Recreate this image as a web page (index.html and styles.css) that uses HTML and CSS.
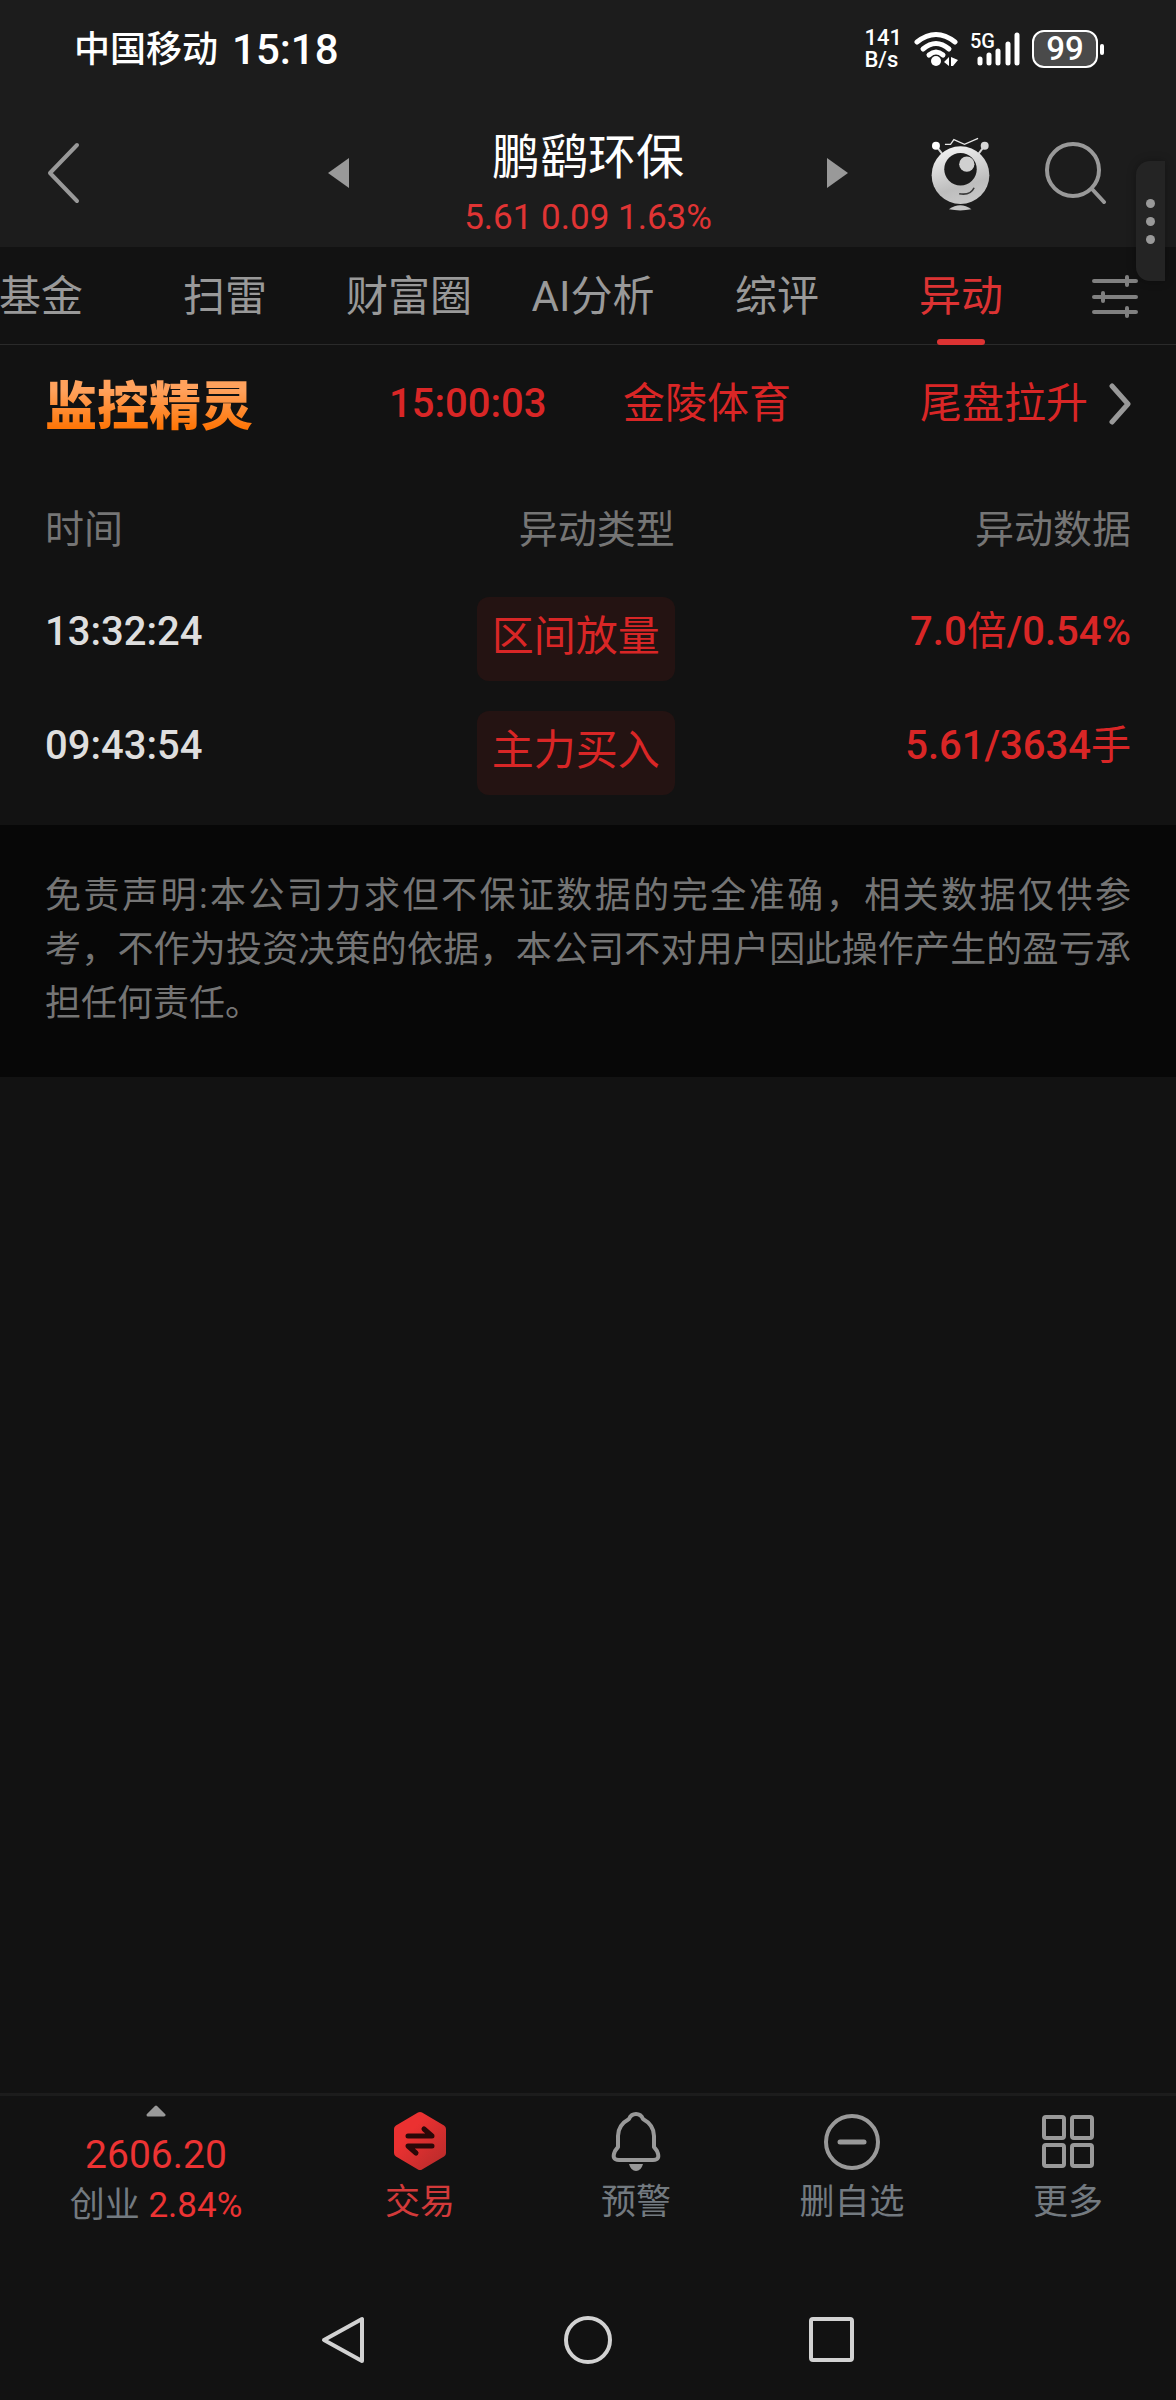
FILE: index.html
```html
<!DOCTYPE html>
<html lang="zh-CN">
<head>
    <meta charset="UTF-8">
    <meta name="viewport" content="width=device-width, initial-scale=1.0">
    <title>鹏鹞环保 - 异动</title>
    <link rel="stylesheet" href="styles.css">
</head>
<body>
    <!-- Status bar -->
    <div class="status-bar">
        <div class="status-left">
            <span class="carrier">中国移动</span>
            <span class="clock">15:18</span>
        </div>
        <div class="status-right">
            <span class="net-speed">141<br>B/s</span>
            <svg width="46" height="38" viewBox="0 0 46 38">
                <g fill="none" stroke="#fff" stroke-width="5" stroke-linecap="round">
                    <path d="M3 12Q22 -3 41 12"/>
                    <path d="M9 19Q22 8 35 19"/>
                    <path d="M15 25Q22 19 29 25"/>
                </g>
                <circle cx="22" cy="31" r="5" fill="#fff"/>
                <path d="M35 27v9l-5-4zM37 27l7 3-5 6h-2z" fill="#fff"/>
            </svg>
            <span class="signal">
                <span class="network">5G</span>
                <svg width="52" height="38" viewBox="0 0 52 38">
                    <path d="M10 29v4M19 25v8M28 21v12M38 14v19M47 5v28" stroke="#fff" stroke-width="5" stroke-linecap="round"/>
                </svg>
            </span>
            <span class="battery">99</span>
        </div>
    </div>

    <!-- Stock header -->
    <header class="header">
        <button class="icon-btn back" aria-label="返回">
            <svg width="34" height="62" viewBox="0 0 34 62"><path d="M31 3L4 31l27 28" fill="none" stroke="#999" stroke-width="4" stroke-linecap="round" stroke-linejoin="round"/></svg>
        </button>
        <div class="stock">
            <button class="icon-btn" aria-label="上一只">
                <svg width="21" height="30" viewBox="0 0 21 30"><path d="M21 0v30L0 15z" fill="#999"/></svg>
            </button>
            <div class="stock-info">
                <h1 class="stock-name">鹏鹞环保</h1>
                <p class="stock-price">5.61 0.09 1.63%</p>
            </div>
            <button class="icon-btn" aria-label="下一只">
                <svg width="21" height="30" viewBox="0 0 21 30"><path d="M0 0v30l21-15z" fill="#999"/></svg>
            </button>
        </div>
        <div class="header-actions">
            <button class="icon-btn" aria-label="助手">
                <svg width="61" height="77" viewBox="90 70 184 230">
                    <defs>
                        <linearGradient id="face" x1="0.3" y1="0" x2="0.6" y2="1">
                            <stop offset="0" stop-color="#f2f2f2"/>
                            <stop offset="0.7" stop-color="#bdbdbd"/>
                            <stop offset="1" stop-color="#c8c8c8"/>
                        </linearGradient>
                    </defs>
                    <path d="M135 97h17l10-14 32 14 41-18" fill="none" stroke="#e6e6e6" stroke-width="4"/>
                    <path d="M108 101l20 26M255 101l-20 26" stroke="#d5d5d5" stroke-width="6"/>
                    <circle cx="108" cy="101" r="12" fill="#fff"/>
                    <circle cx="255" cy="101" r="12" fill="#d8d8d8"/>
                    <circle cx="182" cy="190" r="87" fill="url(#face)"/>
                    <circle cx="182" cy="172" r="49" fill="#1c1c1c"/>
                    <circle cx="201" cy="157" r="23" fill="#d0d0d0"/>
                    <path d="M178 246q34 6 45-18" fill="none" stroke="#3a3a3a" stroke-width="5"/>
                    <path d="M147 293q34-24 68 0-34 7-68 0z" fill="#c4c4c4"/>
                </svg>
            </button>
            <button class="icon-btn" aria-label="搜索">
                <svg width="62" height="62" viewBox="0 0 62 62" fill="none" stroke="#999" stroke-width="4" stroke-linecap="round"><circle cx="28" cy="28" r="26"/><path d="M47 47l12 13"/></svg>
            </button>
        </div>
        <div class="side-handle"><i></i><i></i><i></i></div>
    </header>

    <!-- Tabs -->
    <nav class="tabs">
        <div class="tab-list">
            <a class="tab" href="#">基金</a>
            <a class="tab" href="#">扫雷</a>
            <a class="tab" href="#">财富圈</a>
            <a class="tab" href="#">AI分析</a>
            <a class="tab" href="#">综评</a>
            <a class="tab active" href="#">异动</a>
        </div>
        <button class="icon-btn" aria-label="设置">
            <svg width="46" height="44" viewBox="0 0 46 44" fill="none" stroke="#808080" stroke-width="4" stroke-linecap="round"><path d="M2 7h42M35 3v8M2 23h42M11 19v8M2 38h42M35 34v8"/></svg>
        </button>
    </nav>

    <main class="content">
        <!-- Monitor banner -->
        <a class="monitor" href="#">
            <strong class="monitor-logo">监控精灵</strong>
            <span class="monitor-time">15:00:03</span>
            <span>金陵体育</span>
            <span class="monitor-type">尾盘拉升</span>
            <svg width="24" height="42" viewBox="0 0 24 42"><path d="M4 3l16 18L4 39" fill="none" stroke="#999" stroke-width="5" stroke-linecap="round" stroke-linejoin="round"/></svg>
        </a>

        <table class="moves">
            <thead>
                <tr><th class="col-time">时间</th><th class="col-type">异动类型</th><th>异动数据</th></tr>
            </thead>
            <tbody>
                <tr><td>13:32:24</td><td><span class="badge">区间放量</span></td><td class="value">7.0<span>倍</span>/0.54%</td></tr>
                <tr><td>09:43:54</td><td><span class="badge">主力买入</span></td><td class="value">5.61/3634<span>手</span></td></tr>
            </tbody>
        </table>

        <p class="disclaimer">免责声明:本公司力求但不保证数据的完全准确，相关数据仅供参考，不作为投资决策的依据，本公司不对用户因此操作产生的盈亏承担任何责任。</p>
    </main>

    <!-- Bottom toolbar -->
    <footer class="toolbar">
        <button class="index-quote">
            <svg width="20" height="12" viewBox="0 0 20 12"><path d="M10 2l8 8H2z" fill="#999" stroke="#999" stroke-width="3" stroke-linejoin="round"/></svg>
            <span class="index-value">2606.20</span>
            <span class="index-change">创业 <em>2.84%</em></span>
        </button>
        <button class="tool trade">
            <svg width="54" height="60" viewBox="0 0 54 60">
                <defs>
                    <linearGradient id="hex" x1="0" y1="0" x2="1" y2="1">
                        <stop offset="0.3" stop-color="#eb3131"/>
                        <stop offset="1" stop-color="#b92b2b"/>
                    </linearGradient>
                </defs>
                <path d="M27 5l22 13v24L27 55 5 42V18z" fill="url(#hex)" stroke="url(#hex)" stroke-width="8" stroke-linejoin="round"/>
                <path d="M15 25h24l-8-7M39 35H15l8 7" fill="none" stroke="#2a0808" stroke-width="5" stroke-linecap="round" stroke-linejoin="round"/>
            </svg>
            <span>交易</span>
        </button>
        <button class="tool">
            <svg width="54" height="60" viewBox="0 0 54 60">
                <path d="M27 3q-5 0-7 5Q9 14 9 25v11l-3 4q-4 9 4 9h34q8 0 4-9l-3-4V25Q45 14 34 8q-2-5-7-5z" fill="none" stroke="#999" stroke-width="4" stroke-linejoin="round"/>
                <path d="M20 53h14q-2 7-7 7t-7-7z" fill="#999"/>
            </svg>
            <span>预警</span>
        </button>
        <button class="tool">
            <svg width="58" height="60" viewBox="0 0 58 60" fill="none" stroke="#999" stroke-width="4" stroke-linecap="round"><circle cx="29" cy="31" r="26"/><path d="M17 31h24" stroke-width="5"/></svg>
            <span>删自选</span>
        </button>
        <button class="tool">
            <svg width="54" height="60" viewBox="0 0 54 60" fill="none" stroke="#999" stroke-width="4"><rect x="3" y="6" width="20" height="21" rx="2"/><rect x="31" y="6" width="20" height="21" rx="2"/><rect x="3" y="34" width="20" height="21" rx="2"/><rect x="31" y="34" width="20" height="21" rx="2"/></svg>
            <span>更多</span>
        </button>
    </footer>

    <!-- System navigation -->
    <div class="system-nav">
        <button class="icon-btn" aria-label="后退">
            <svg width="48" height="48" viewBox="0 0 48 48"><path d="M42 3v42L4 24z" fill="none" stroke="#d2d2d2" stroke-width="4" stroke-linejoin="round"/></svg>
        </button>
        <button class="icon-btn" aria-label="主页">
            <svg width="48" height="48" viewBox="0 0 48 48"><circle cx="24" cy="24" r="22" fill="none" stroke="#d2d2d2" stroke-width="4"/></svg>
        </button>
        <button class="icon-btn" aria-label="最近任务">
            <svg width="48" height="48" viewBox="0 0 48 48"><rect x="3" y="3" width="41" height="41" rx="2" fill="none" stroke="#d2d2d2" stroke-width="4"/></svg>
        </button>
    </div>
</body>
</html>
```
FILE: styles.css
```css
* {
    box-sizing: border-box;
}
body {
    margin: 0;
    min-height: 100vh;
    display: flex;
    flex-direction: column;
    background-color: #121212;
    color: #999;
    font-family: Roboto, "Noto Sans CJK SC", sans-serif;
}
h1, p {
    margin: 0;
    font-weight: 400;
}
a {
    color: inherit;
    text-decoration: none;
}
button {
    padding: 0;
    border: none;
    background: none;
    color: inherit;
    font-family: inherit;
    cursor: pointer;
}
svg {
    display: block;
    flex: none;
}
.icon-btn {
    flex: none;
}

/* Status bar */
.status-bar {
    display: flex;
    justify-content: space-between;
    align-items: center;
    height: 98px;
    padding: 0 78px 0 74px;
    background-color: #1c1c1c;
    color: #fff;
    font-weight: 500;
}
.status-left, .status-right {
    display: flex;
    align-items: center;
}
.status-left {
    gap: 14px;
    padding-top: 2px;
}
.carrier {
    font-size: 36px;
    line-height: 48px;
}
.clock {
    font-size: 42px;
    line-height: 48px;
}
.net-speed {
    margin-right: 12px;
    font-size: 22px;
    line-height: 22px;
}
.signal {
    position: relative;
    margin: 0 10px;
}
.network {
    position: absolute;
    left: 0;
    top: 1px;
    font-size: 20px;
    line-height: 20px;
}
.battery {
    position: relative;
    width: 66px;
    border: 2px solid #fff;
    border-radius: 12px;
    background-color: #4a4a4a;
    font-size: 33px;
    line-height: 34px;
    text-align: center;
}
.battery::after {
    content: "";
    position: absolute;
    right: -8px;
    top: 12px;
    width: 4px;
    height: 11px;
    border-radius: 2px;
    background-color: #fff;
}

/* Header */
.header {
    position: relative;
    display: grid;
    grid-template-columns: 1fr 520px 1fr;
    align-items: center;
    height: 149px;
    background-color: #1c1c1c;
}
.back {
    justify-self: start;
    margin-left: 46px;
}
.stock {
    display: flex;
    justify-content: space-between;
    align-items: center;
}
.stock-info {
    padding-top: 30px;
    text-align: center;
}
.stock-name {
    color: #fff;
    font-size: 48px;
    line-height: 60px;
}
.stock-price {
    color: #e03434;
    font-size: 35px;
    line-height: 60px;
}
.header-actions {
    display: flex;
    justify-content: flex-end;
    align-items: center;
    gap: 54px;
    padding-right: 69px;
}
.side-handle {
    position: absolute;
    z-index: 2;
    right: 11px;
    top: 63px;
    display: flex;
    flex-direction: column;
    justify-content: center;
    align-items: center;
    gap: 9px;
    width: 29px;
    height: 120px;
    border-radius: 14px 0 0 14px;
    background-color: #242424;
    box-shadow: 0 0 10px rgba(0, 0, 0, 0.3);
}
.side-handle i {
    width: 9px;
    height: 9px;
    border-radius: 50%;
    background-color: #999;
}

/* Tabs */
.tabs {
    display: flex;
    align-items: center;
    height: 98px;
    padding-right: 38px;
    border-bottom: 1px solid #2a2a2a;
}
.tab-list {
    flex: 1;
    display: flex;
    justify-content: flex-end;
    min-width: 0;
    margin-right: 39px;
    overflow: hidden;
}
.tab {
    position: relative;
    flex: none;
    width: 184px;
    height: 98px;
    font-size: 42px;
    line-height: 100px;
    text-align: center;
}
.tab.active {
    color: #dc3333;
}
.tab.active::after {
    content: "";
    position: absolute;
    left: 68px;
    bottom: 0;
    width: 48px;
    height: 6px;
    border-radius: 3px;
    background-color: #dc3333;
}

/* Content */
.content {
    flex: 1;
}
.monitor {
    display: grid;
    grid-template-columns: 344px 234px 1fr auto 24px;
    align-items: center;
    height: 118px;
    padding: 0 44px 0 45px;
    color: #d92626;
    font-size: 42px;
    line-height: 60px;
}
.monitor-logo {
    padding-top: 8px;
    font-size: 52px;
    font-weight: 900;
    background-image: linear-gradient(#ffa15c 30%, #ff7200 90%);
    -webkit-background-clip: text;
    background-clip: text;
    color: transparent;
}
.monitor-time {
    font-size: 40px;
    font-weight: 500;
}
.monitor-type {
    margin-right: 20px;
}
.moves {
    width: 100%;
    padding: 0 45px;
    border-spacing: 0;
    table-layout: fixed;
    font-size: 40px;
    text-align: right;
}
.moves th {
    padding: 0;
    color: #757575;
    font-size: 39px;
    font-weight: 400;
    line-height: 134px;
}
.moves td {
    padding: 0 0 30px;
    vertical-align: top;
    line-height: 70px;
}
.moves th:first-child, .moves td:first-child {
    text-align: left;
}
.moves td:first-child {
    color: #dedede;
    font-weight: 500;
}
.col-time {
    width: 35%;
}
.col-type {
    width: 23%;
}
.badge {
    display: block;
    width: fit-content;
    margin-left: auto;
    padding: 8px 15px 12px;
    border-radius: 12px;
    background-color: #241312;
    color: #d92626;
    font-size: 42px;
    line-height: 64px;
}
.moves .value {
    color: #d92626;
    font-weight: 500;
}
.value span {
    font-weight: 400;
}
.disclaimer {
    padding: 44px 45px 46px;
    background-color: #070707;
    color: #757575;
    font-size: 36px;
    line-height: 54px;
    text-align: justify;
}

/* Toolbar */
.toolbar {
    display: grid;
    grid-template-columns: 312px repeat(4, 1fr);
    height: 186px;
    border-top: 3px solid #1c1c1c;
    color: #737a80;
}
.index-quote, .tool {
    display: flex;
    flex-direction: column;
    align-items: center;
    font-size: 35px;
}
.index-quote {
    padding-top: 9px;
}
.index-value {
    margin-top: 12px;
    color: #ec3333;
    font-size: 39px;
    line-height: 52px;
}
.index-change {
    line-height: 50px;
}
.index-change em {
    color: #ec3333;
    font-style: normal;
}
.tool {
    padding-top: 15px;
}
.tool span {
    line-height: 64px;
}
.trade {
    color: #d23a3a;
}

/* System navigation */
.system-nav {
    display: flex;
    justify-content: center;
    align-items: center;
    gap: 196px;
    height: 121px;
}
```
